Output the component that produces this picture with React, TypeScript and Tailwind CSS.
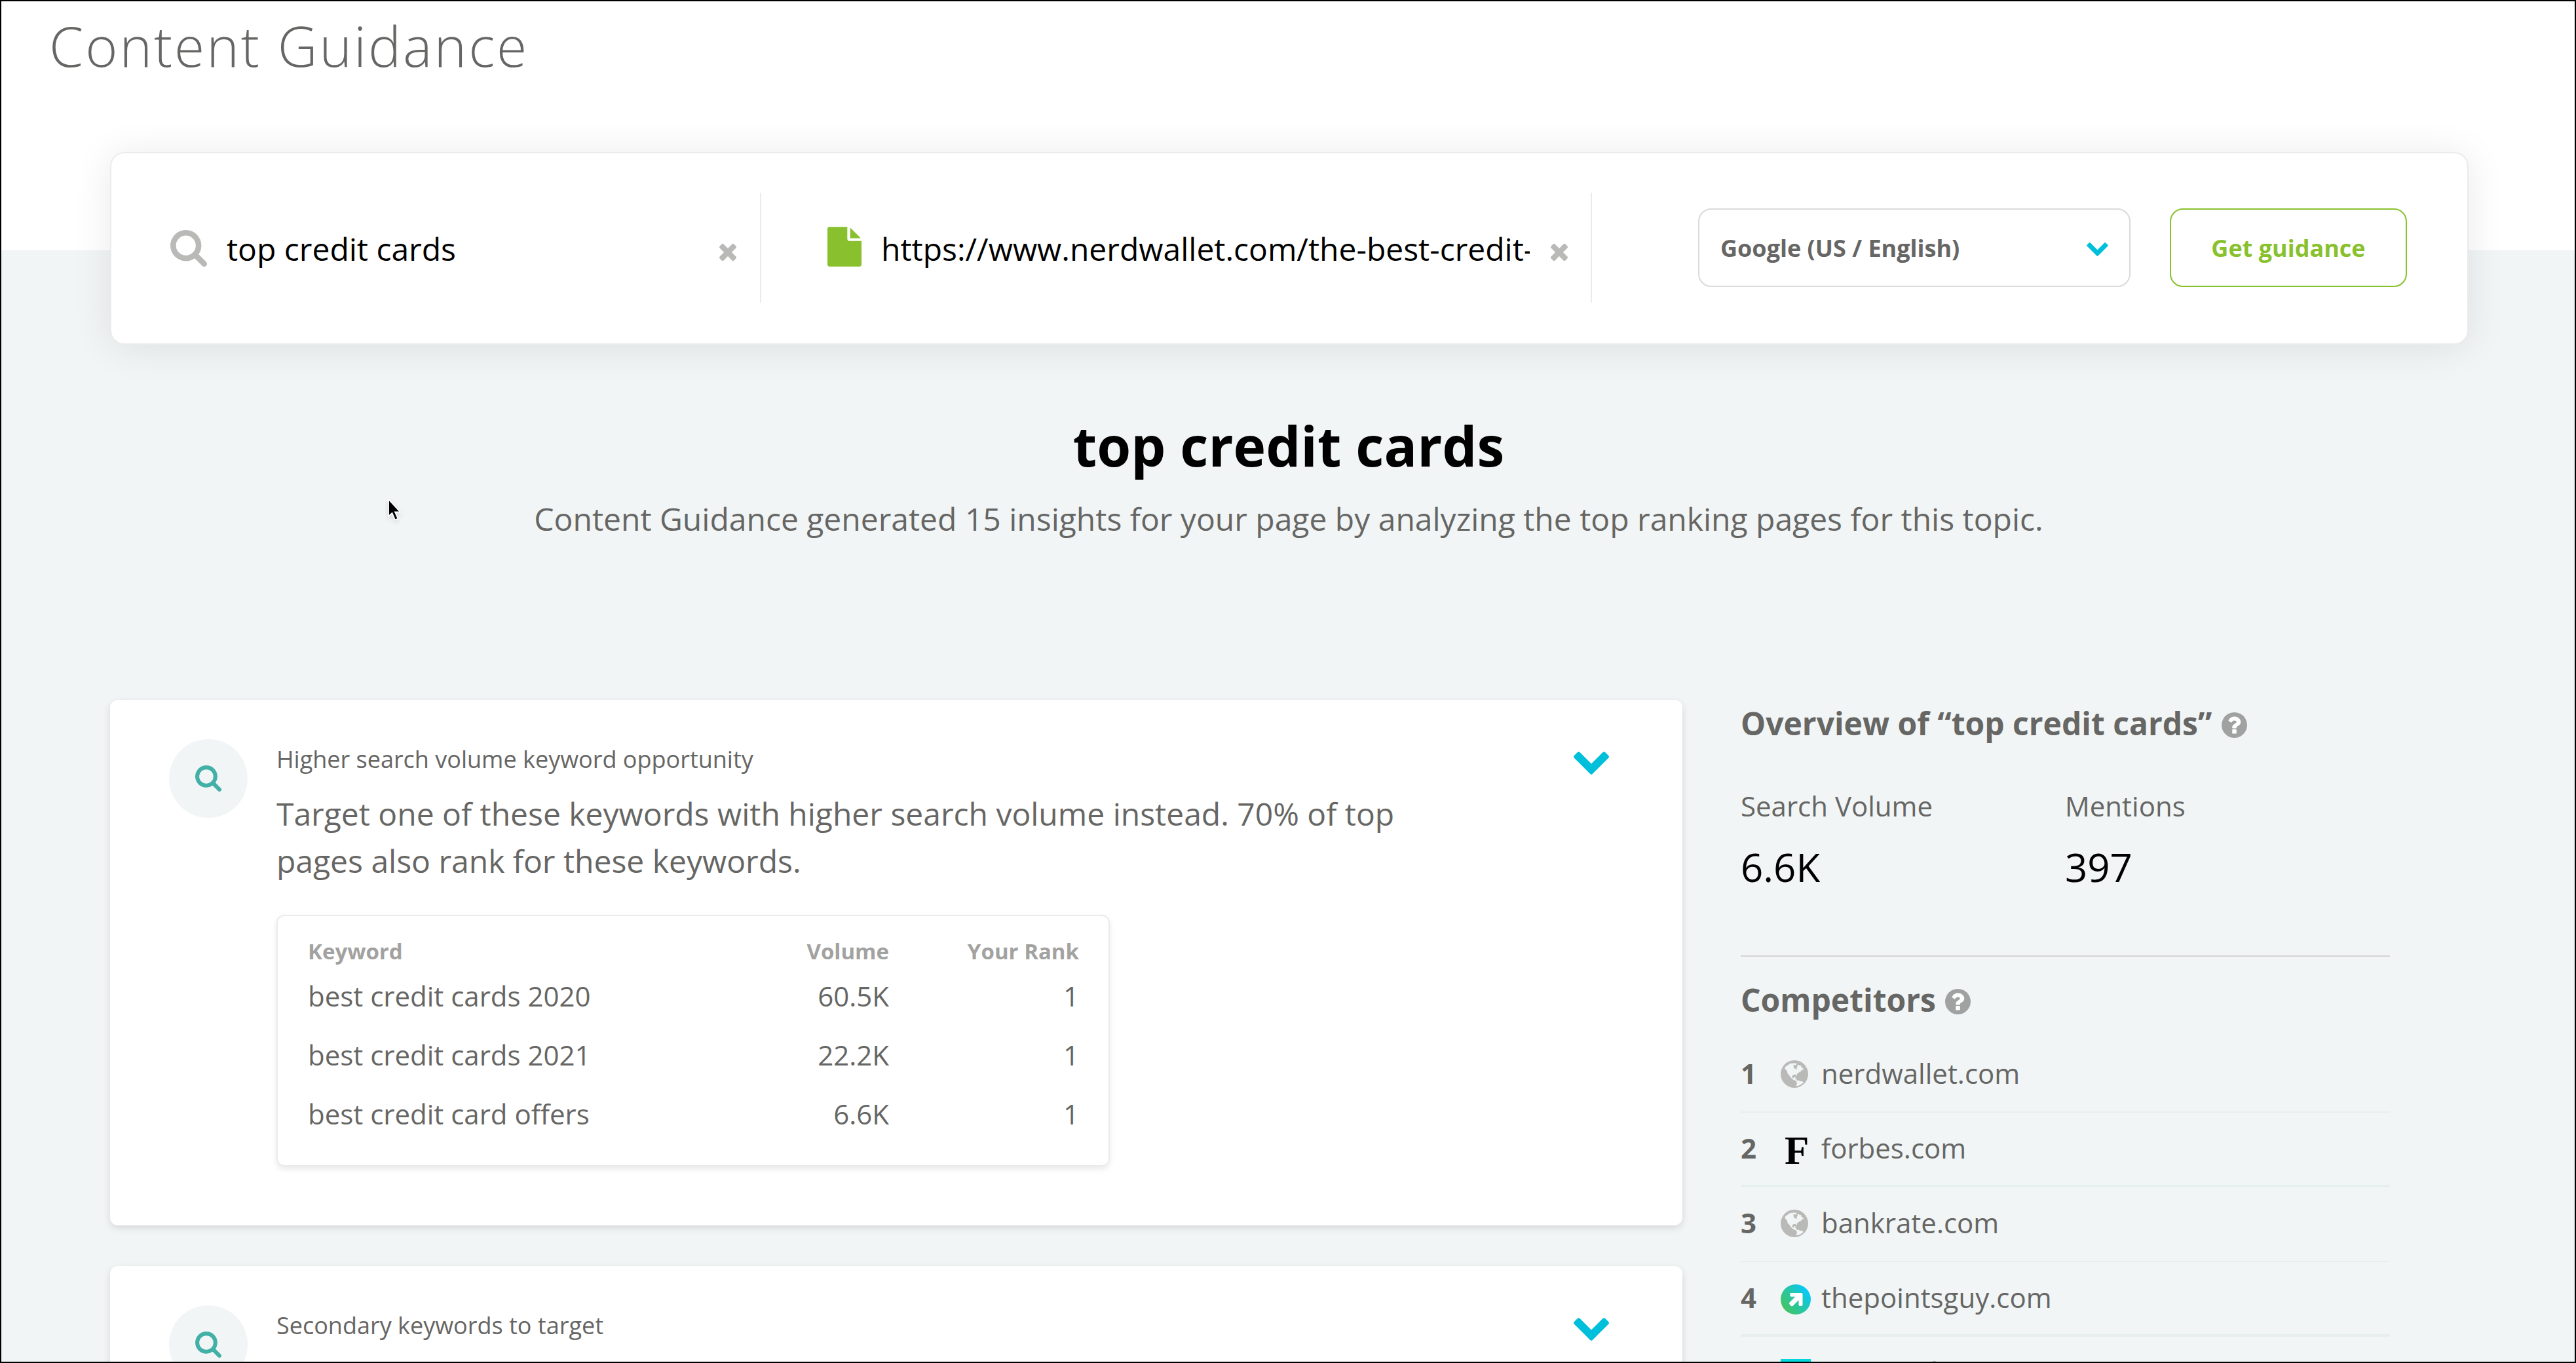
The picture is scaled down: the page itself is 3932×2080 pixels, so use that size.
import type { ReactNode } from "react";

type IconProps = { className?: string };

function SearchIcon({ className }: IconProps) {
  return (
    <svg viewBox="64 128 1664 1664" fill="currentColor" className={className}>
      <path d="M1216 832q0-185-131.5-316.5t-316.5-131.5-316.5 131.5-131.5 316.5 131.5 316.5 316.5 131.5 316.5-131.5 131.5-316.5zm512 832q0 52-38 90t-90 38q-54 0-90-38l-343-342q-179 124-399 124-143 0-273.5-55.5t-225-150-150-225-55.5-273.5 55.5-273.5 150-225 225-150 273.5-55.5 273.5 55.5 225 150 150 225 55.5 273.5q0 220-124 399l343 343q37 37 37 90z" />
    </svg>
  );
}

function CloseIcon({ className }: IconProps) {
  return (
    <svg viewBox="302 366 1188 1188" fill="currentColor" className={className}>
      <path d="M1490 1322q0 40-28 68l-136 136q-28 28-68 28t-68-28l-294-294-294 294q-28 28-68 28t-68-28l-136-136q-28-28-28-68t28-68l294-294-294-294q-28-28-28-68t28-68l136-136q28-28 68-28t68 28l294 294 294-294q28-28 68-28t68 28l136 136q28 28 28 68t-28 68l-294 294 294 294q28 28 28 68z" />
    </svg>
  );
}

function FileIcon({ className }: IconProps) {
  return (
    <svg viewBox="128 0 1536 1792" fill="currentColor" className={className}>
      <path d="M1152 512v-472q22 14 36 28l408 408q14 14 28 36h-472zm-128 32q0 40 28 68t68 28h544v1056q0 40-28 68t-68 28h-1344q-40 0-68-28t-28-68v-1600q0-40 28-68t68-28h800v544z" />
    </svg>
  );
}

function ChevronDown({ className }: IconProps) {
  return (
    <svg viewBox="90 533 1612 1035" fill="currentColor" className={className}>
      <path d="M1683 808l-742 741q-19 19-45 19t-45-19l-742-741q-19-19-19-45.5t19-45.5l166-165q19-19 45-19t45 19l531 531 531-531q19-19 45-19t45 19l166 165q19 19 19 45.5t-19 45.5z" />
    </svg>
  );
}

function QuestionIcon() {
  return (
    <svg viewBox="128 128 1536 1536" className="mt-[5px] h-[39px] w-[39px] text-[#a0a2a2]">
      <circle cx="896" cy="896" r="700" fill="#fff" />
      <path
        fill="currentColor"
        d="M1024 1376v-192q0-14-9-23t-23-9h-192q-14 0-23 9t-9 23v192q0 14 9 23t23 9h192q14 0 23-9t9-23zm256-672q0-88-55.5-163t-138.5-116-170-41q-243 0-371 213-15 24 8 42l132 100q7 6 19 6 16 0 25-12 53-68 86-92 34-24 86-24 48 0 85.5 26t37.5 59q0 38-20 61t-68 45q-63 28-115.5 86.5t-52.5 125.5v36q0 14 9 23t23 9h192q14 0 23-9t9-23q0-19 21.5-49.5t54.5-49.5q32-18 49-28.5t46-35 44.5-48 28-60.5 12.5-81zm384 192q0 209-103 385.5t-279.5 279.5-385.5 103-385.5-103-279.5-279.5-103-385.5 103-385.5 279.5-279.5 385.5-103 385.5 103 279.5 279.5 103 385.5z"
      />
    </svg>
  );
}

function GlobeIcon() {
  return (
    <svg viewBox="0 0 125 125" className="mt-[3px] h-[42px] w-[42px]">
      <circle cx="62.5" cy="62.5" r="62.5" fill="#b9b9b7" />
      <path
        fill="#f1f5f6"
        d="M19 38l3-9 9-5 6-5 5-5 4 2 5-3 2 3 7-5 3 4 8-2 2 5-6 5-3-2-7 2 3 6-2 6 8 3 3 5 4-1-1-7 5-8-2-5 5-2 7 4 5 0 3 8 7 5 3 6-6 0-6 3 2 4-9 3-6 5-7 5 2 5-3 2-5-5-9 1-6 6 0 7 5 3 4-6 7-1-2 9 6 1 1 9 7 4 5-1-8 4-10-8-11-5-10-9-6-10-8-8-3-12z"
      />
      <path fill="#f1f5f6" d="M72 93l8-2 9 4 11 1 3 6-8 6-8 5-9 3-9 1 5-10z" />
    </svg>
  );
}

function PointsIcon() {
  return (
    <svg viewBox="0 0 46 46" className="mt-[8px] h-[46px] w-[46px]">
      <defs>
        <linearGradient id="points" x1="0.1" y1="0.8" x2="0.9" y2="0.2">
          <stop offset="0" stopColor="#43c463" />
          <stop offset="0.5" stopColor="#26c6a8" />
          <stop offset="1" stopColor="#06c9fb" />
        </linearGradient>
      </defs>
      <circle cx="23" cy="23" r="23" fill="url(#points)" />
      <path
        d="M14.5 13h17a2 2 0 0 1 2 2v16a2 2 0 0 1-2 2h-2a2 2 0 0 1-2-2v-7l-8.500 8.500a2.500 2.500 0 0 1-3.500 0l-1.700-1.700a2.500 2.500 0 0 1 0-3.500l8.500-8.500h-6a2 2 0 0 1-2-2z"
        fill="#fff"
      />
    </svg>
  );
}

const keywords = [
  { keyword: "best credit cards 2020", volume: "60.5K", rank: 1 },
  { keyword: "best credit cards 2021", volume: "22.2K", rank: 1 },
  { keyword: "best credit card offers", volume: "6.6K", rank: 1 },
];

const competitors: { domain: string; icon: ReactNode }[] = [
  { domain: "nerdwallet.com", icon: <GlobeIcon /> },
  {
    domain: "forbes.com",
    icon: (
      <span className="mt-[9px] ml-[6px] font-['Liberation_Serif'] text-[61px] leading-[60px] font-bold text-black">
        F
      </span>
    ),
  },
  { domain: "bankrate.com", icon: <GlobeIcon /> },
  { domain: "thepointsguy.com", icon: <PointsIcon /> },
  { domain: "wallethub.com", icon: <span className="mt-[8px] h-[46px] w-[46px] bg-[#00d8dc]" /> },
];

function SearchBar() {
  return (
    <div className="relative -mt-[150px] ml-[166px] flex h-[294px] w-[3600px] items-start rounded-[22px] border-2 border-[#ebebeb] bg-white pt-[60px] shadow-[0_4px_60px_rgba(0,0,0,0.09)]">
      <div className="flex h-[168px] w-[992px] items-center border-r-2 border-[#ebebeb] pl-[90px]">
        <SearchIcon className="mt-[2px] h-14 w-14 text-[#b9b9b7]" />
        <span className="mt-[3px] ml-[30px] w-[752px] text-[48px] leading-[72px] text-black">top credit cards</span>
        <CloseIcon className="mt-[14px] h-[26px] w-[26px] text-[#b9b9b7]" />
      </div>
      <div className="flex h-[168px] w-[1268px] items-center border-r-2 border-[#ebebeb] pl-[101px]">
        <FileIcon className="-mt-[3px] h-[61px] w-[52px] text-[#88c12d]" />
        <span className="mt-[3px] ml-[30px] w-[990px] overflow-hidden text-[48px] leading-[72px] whitespace-nowrap text-black">
          https://www.nerdwallet.com/the-best-credit-cards
        </span>
        <CloseIcon className="mt-[14px] ml-[32px] h-[26px] w-[26px] text-[#b9b9b7]" />
      </div>
      <div className="mt-[24px] ml-[162px] flex h-[120px] w-[660px] items-center justify-between rounded-[20px] border-2 border-[#dadada] pr-[32px] pl-[32px] text-[36px] font-bold text-[#666664]">
        <span className="mt-[2px]">Google (US / English)</span>
        <ChevronDown className="mt-[4px] h-[21px] w-[33px] text-[#00bfdb]" />
      </div>
      <button className="mt-[24px] ml-[60px] h-[120px] w-[362px] rounded-[20px] border-2 border-[#88c12d] pt-[2px] text-[36px] font-bold text-[#88c12d]">
        Get guidance
      </button>
    </div>
  );
}

function InsightCard({ title, children }: { title: string; children?: ReactNode }) {
  return (
    <div className="flex h-[802px] shrink-0 items-start rounded-[12px] bg-white pl-[90px] shadow-[0_4px_12px_rgba(0,0,0,0.12)]">
      <div className="mt-[60px] flex h-[120px] w-[120px] items-center justify-center rounded-full bg-[#f1f5f6]">
        <SearchIcon className="h-[40px] w-[40px] text-[#42b0a6]" />
      </div>
      <div className="ml-[44px] w-[1980px] pt-[67px]">
        <p className="text-[36px] leading-[48px]">{title}</p>
        {children}
      </div>
      <ChevronDown className="mt-[79px] h-[35px] w-[54px] text-[#00bfdb]" />
    </div>
  );
}

function KeywordTable() {
  return (
    <div className="mt-[46px] h-[384px] w-[1272px] rounded-[12px] border-2 border-[#ebebeb] pt-[32px] pr-[45px] pl-[46px] shadow-[0_4px_10px_rgba(0,0,0,0.09)]">
      <div className="flex text-[33px] leading-[44px] font-bold text-[#a2a2a0]">
        <span className="flex-1">Keyword</span>
        <span className="w-[300px] text-right">Volume</span>
        <span className="w-[290px] text-right">Your Rank</span>
      </div>
      <div className="mt-[1px]">
        {keywords.map((row) => (
          <div key={row.keyword} className="flex text-[42px] leading-[90px]">
            <span className="flex-1">{row.keyword}</span>
            <span className="w-[300px] text-right">{row.volume}</span>
            <span className="w-[290px] text-right">{row.rank}</span>
          </div>
        ))}
      </div>
    </div>
  );
}

function Sidebar() {
  return (
    <div className="w-[991px]">
      <h2 className="mt-[4px] flex items-center gap-[15px] text-[48px] leading-[64px] font-bold">
        Overview of “top credit cards” <QuestionIcon />
      </h2>
      <div className="mt-[66px] flex">
        <div className="w-[495px]">
          <p className="text-[42px] leading-[56px]">Search Volume</p>
          <p className="mt-[25px] text-[60px] leading-[80px] text-black">6.6K</p>
        </div>
        <div>
          <p className="text-[42px] leading-[56px]">Mentions</p>
          <p className="mt-[25px] text-[60px] leading-[80px] text-black">397</p>
        </div>
      </div>
      <div className="mt-[95px] h-[2px] bg-[#d4d4d4]" />
      <h2 className="mt-[34px] flex items-center gap-[14px] text-[48px] leading-[64px] font-bold">
        Competitors <QuestionIcon />
      </h2>
      <div className="mt-[26px]">
        {competitors.map((item, index) => (
          <div
            key={item.domain}
            className="flex h-[114px] items-center border-b-2 border-[#e7efee] pb-[6px] text-[42px] even:border-b-4 even:pb-[4px]"
          >
            <span className="w-[61px] font-bold">{index + 1}</span>
            <span className="flex w-[62px] items-center">{item.icon}</span>
            <span>{item.domain}</span>
          </div>
        ))}
      </div>
    </div>
  );
}

function Cursor() {
  return (
    <svg viewBox="0 0 20 34" className="absolute top-[759px] left-[590px] h-[34px] w-[20px] drop-shadow-md">
      <path
        d="M1 1v26l5.500-5 4.500 10.500 4.500-2-4.500-10h8z"
        fill="#000"
        stroke="#fff"
        strokeWidth="1.800"
      />
    </svg>
  );
}

export default function App() {
  return (
    <div className="relative h-[2080px] w-[3932px] overflow-hidden border-2 border-black bg-[#f1f5f6] font-['Open_Sans',sans-serif] text-[#666664]">
      <header className="h-[380px] bg-white pt-[12px] pl-[73px]">
        <h1 className="text-[84px] leading-[112px] font-light tracking-[3px]">Content Guidance</h1>
      </header>
      <SearchBar />
      <h1 className="mt-[104px] pl-[2px] text-center text-[84px] leading-[100px] font-bold text-black">
        top credit cards
      </h1>
      <p className="mt-[26px] pl-[2px] text-center text-[48px] leading-[72px]">
        Content Guidance generated 15 insights for your page by analyzing the top ranking pages for this topic.
      </p>
      <div className="mt-[240px] ml-[166px] flex items-start gap-[89px]">
        <div className="flex w-[2400px] flex-col gap-[62px]">
          <InsightCard title="Higher search volume keyword opportunity">
            <p className="mt-[23px] w-[1780px] text-[48px] leading-[72px]">
              Target one of these keywords with higher search volume instead. 70% of top pages also rank for these
              keywords.
            </p>
            <KeywordTable />
          </InsightCard>
          <InsightCard title="Secondary keywords to target" />
        </div>
        <Sidebar />
      </div>
      <Cursor />
    </div>
  );
}
